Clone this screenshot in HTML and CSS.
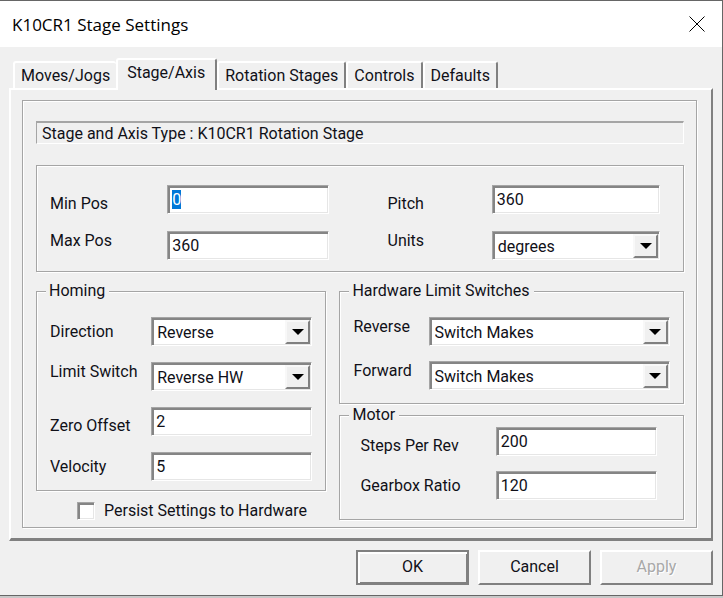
FILE: index.html
```html
<!DOCTYPE html>
<html lang="en">
<head>
<meta charset="utf-8">
<title>K10CR1 Stage Settings</title>
<link rel="stylesheet" href="styles.css">
</head>
<body>
<main class="dialog">
  <header class="titlebar">
    <h1>K10CR1 Stage Settings</h1>
    <button class="close" type="button" aria-label="Close">
      <svg viewBox="0 0 16 16" width="16" height="16"><path d="M.5.5l15 15M15.5.5l-15 15" stroke="#000" fill="none"/></svg>
    </button>
  </header>

  <form class="content">
    <div class="tabs" role="tablist">
      <button class="tab first" type="button" role="tab">Moves/Jogs</button>
      <button class="tab active" type="button" role="tab" aria-selected="true">Stage/Axis</button>
      <button class="tab" type="button" role="tab">Rotation Stages</button>
      <button class="tab" type="button" role="tab">Controls</button>
      <button class="tab" type="button" role="tab">Defaults</button>
    </div>

    <section class="page" role="tabpanel">
      <div class="panel etched">
        <p class="type">Stage and Axis Type : K10CR1 Rotation Stage</p>

        <div class="range etched">
          <div class="fields min-max">
            <label class="low" for="min">Min Pos</label>
            <input class="box" id="min" type="text" value="0" autofocus>
            <label class="high" for="max">Max Pos</label>
            <input class="box" id="max" type="text" value="360">
          </div>
          <div class="fields pitch-units">
            <label class="low" for="pitch">Pitch</label>
            <input class="box" id="pitch" type="text" value="360">
            <label class="high" for="units">Units</label>
            <div class="combo">
              <select class="box" id="units"><option>degrees</option></select>
              <span class="drop"><svg viewBox="0 0 12 6" width="12" height="6"><path d="M0 0h12L6 6z"/></svg></span>
            </div>
          </div>
        </div>

        <div class="columns">
          <div class="column">
            <fieldset class="group etched">
              <legend>Homing</legend>
              <div class="fields homing">
                <label for="direction">Direction</label>
                <div class="combo">
                  <select class="box" id="direction"><option>Reverse</option></select>
                  <span class="drop"><svg viewBox="0 0 12 6" width="12" height="6"><path d="M0 0h12L6 6z"/></svg></span>
                </div>
                <label class="high" for="limit">Limit Switch</label>
                <div class="combo">
                  <select class="box" id="limit"><option>Reverse HW</option></select>
                  <span class="drop"><svg viewBox="0 0 12 6" width="12" height="6"><path d="M0 0h12L6 6z"/></svg></span>
                </div>
                <label class="low" for="offset">Zero Offset</label>
                <input class="box" id="offset" type="text" value="2">
                <label for="velocity">Velocity</label>
                <input class="box" id="velocity" type="text" value="5">
              </div>
            </fieldset>
            <div class="persist">
              <input id="persist" type="checkbox">
              <label for="persist">Persist Settings to Hardware</label>
            </div>
          </div>

          <div class="column">
            <fieldset class="group etched">
              <legend>Hardware Limit Switches</legend>
              <div class="fields switches">
                <label class="high" for="reverse">Reverse</label>
                <div class="combo">
                  <select class="box" id="reverse"><option>Switch Makes</option></select>
                  <span class="drop"><svg viewBox="0 0 12 6" width="12" height="6"><path d="M0 0h12L6 6z"/></svg></span>
                </div>
                <label class="high" for="forward">Forward</label>
                <div class="combo">
                  <select class="box" id="forward"><option>Switch Makes</option></select>
                  <span class="drop"><svg viewBox="0 0 12 6" width="12" height="6"><path d="M0 0h12L6 6z"/></svg></span>
                </div>
              </div>
            </fieldset>
            <fieldset class="group etched">
              <legend>Motor</legend>
              <div class="fields motor">
                <label class="low" for="steps">Steps Per Rev</label>
                <input class="box" id="steps" type="text" value="200">
                <label for="ratio">Gearbox Ratio</label>
                <input class="box" id="ratio" type="text" value="120">
              </div>
            </fieldset>
          </div>
        </div>
      </div>
    </section>

    <footer class="actions">
      <button class="action default" type="button">OK</button>
      <button class="action" type="button">Cancel</button>
      <button class="action" type="button" disabled>Apply</button>
    </footer>
  </form>
</main>
<script src="script.js"></script>
</body>
</html>
```
FILE: styles.css
```css
* { box-sizing: border-box; }

body {
  margin: 0;
  background: #c8c8c8;
  color: #101018;
  font: 16px/20px Roboto, "Liberation Sans", sans-serif;
}

button, input, select { font: inherit; color: inherit; margin: 0; }

.dialog {
  background: #f0f0f0;
  border: solid #666;
  border-width: 1px 1px 1px 0;
}

.titlebar {
  display: flex;
  align-items: center;
  justify-content: space-between;
  height: 46px;
  padding: 0 17px 0 12px;
  background: #fff;
}

h1 {
  margin: 0;
  padding-top: 1px;
  color: #000;
  font: 17px/24px "Open Sans", "Noto Sans", sans-serif;
}

.close {
  display: flex;
  padding: 0;
  border: 0;
  background: none;
}

.content { padding: 11px 9px 10px; }

/* Tabs */
.tabs {
  display: flex;
  align-items: flex-end;
  padding-left: 4px;
}

.tab {
  height: 27px;
  padding: 0 6px;
  border: solid #fff;
  border-width: 2px 2px 0 2px;
  border-right-color: #808080;
  border-radius: 3px 3px 0 0;
  background: #f0f0f0;
  white-space: nowrap;
}

.tab.first { border-right: 0; }

.tab.active {
  z-index: 1;
  height: 32px;
  margin-bottom: -2px;
  padding: 0 10px 4px 9px;
}

.page {
  padding: 10px 14px 10px 11px;
  border: 2px solid #fff;
  border-bottom-width: 3px;
  border-right-color: #808080;
  border-bottom-color: #808080;
}

/* Etched frames */
.etched {
  border: 1px solid #a5a5a5;
  box-shadow: 1px 1px 0 #fff, inset 1px 1px 0 #fff;
}

.panel { padding: 20px 12px 6px 13px; }

.type {
  height: 23px;
  margin: 0 0 21px;
  padding: 1px 5px;
  border: 1px solid #fff;
  border-top: 2px solid #a5a5a5;
  border-left-color: #a5a5a5;
}

.range {
  display: grid;
  grid-template-columns: 278fr 272fr;
  column-gap: 59px;
  padding: 19px 23px 11px 13px;
}

.columns {
  display: grid;
  grid-template-columns: 290fr 344fr;
  column-gap: 13px;
  margin-top: 9px;
}

.column { min-width: 0; }

.group {
  min-width: 0;
  margin: 0;
  padding: 0 13px 9px;
}

.group + .group { margin-top: 1px; }

legend {
  padding: 0 4px 0 3px;
  margin-left: -4px;
  background: #f0f0f0;
}

/* Label and field pairs */
.fields {
  display: grid;
  grid-auto-rows: 29px;
  row-gap: 16px;
  align-items: center;
}

.min-max { grid-template-columns: 117fr 161fr; row-gap: 17px; }
.pitch-units { grid-template-columns: 104fr 168fr; row-gap: 17px; }
.homing { grid-template-columns: 101fr 161fr; padding-top: 16px; }
.switches { grid-template-columns: 75fr 241fr; padding: 16px 0 4px; row-gap: 15px; }
.motor { grid-template-columns: 135fr 161fr; padding: 2px 13px 10px 7px; row-gap: 15px; }

.low { align-self: end; }
.high { align-self: start; }

.box {
  width: 100%;
  min-width: 0;
  height: 29px;
  padding: 0 4px 1px;
  border: 1px solid #fff;
  border-top-color: #a5a5a5;
  border-left-color: #a5a5a5;
  border-radius: 0;
  outline: 0;
  background: #fff;
  box-shadow: inset 2px 2px 0 #858585, inset -1px -1px 0 #e6e6e6;
}

.box::selection { background: #0078d7; color: #fff; }

.combo { position: relative; }

select.box {
  display: block;
  padding: 3px 0 0 5px;
  appearance: none;
}

.drop {
  position: absolute;
  top: 3px;
  right: 2px;
  bottom: 2px;
  display: flex;
  align-items: center;
  justify-content: center;
  width: 25px;
  border: 2px solid #f8f8f8;
  border-right-color: #808080;
  border-bottom-color: #808080;
  background: #f0f0f0;
  pointer-events: none;
}

.persist {
  display: flex;
  align-items: center;
  gap: 9px;
  margin-top: 10px;
  padding-left: 41px;
}

.persist input {
  width: 18px;
  height: 18px;
  border: 1px solid #fff;
  border-top-color: #a5a5a5;
  border-left-color: #a5a5a5;
  appearance: none;
  background: #fff;
  box-shadow: inset 2px 2px 0 #858585, inset -1px -1px 0 #e6e6e6;
}

/* Bottom buttons */
.actions {
  display: flex;
  justify-content: flex-end;
  gap: 9px;
  margin-top: 9px;
}

.action {
  width: 113px;
  height: 35px;
  padding: 0 0 1px;
  border: 2px solid #fff;
  border-right-color: #808080;
  border-bottom-color: #808080;
  background: #f0f0f0;
}

.action.default {
  border-color: #808080;
  box-shadow: inset 2px 2px 0 #fff, inset -1px -1px 0 #808080;
}

.action:disabled {
  color: #a8a8a8;
  text-shadow: 1px 1px 0 #fff;
}
```
FILE: script.js
```js
const minField = document.getElementById("min");
minField.focus();
minField.select();
```
